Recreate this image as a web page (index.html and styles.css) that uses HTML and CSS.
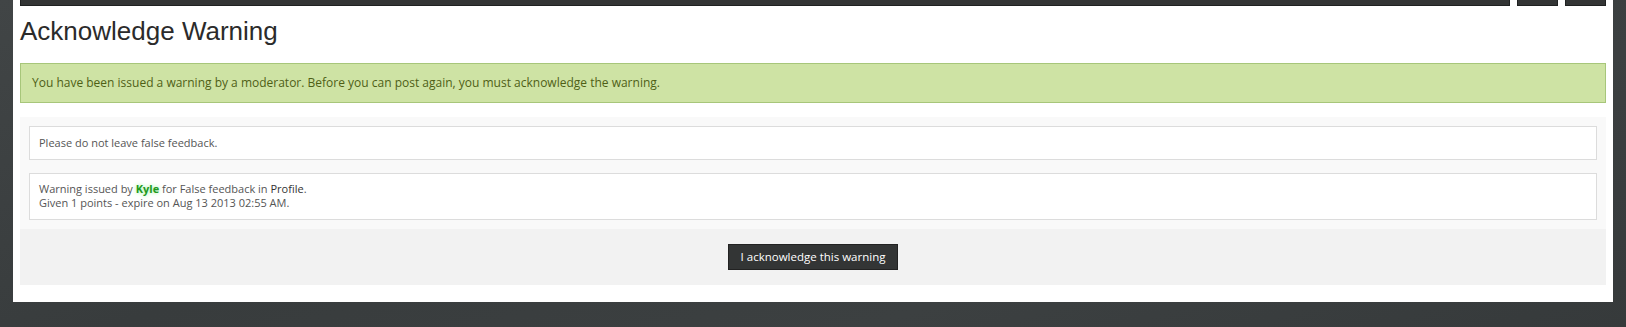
FILE: index.html
```html
<!DOCTYPE html>
<html>
<head>
<meta charset="utf-8">
<link rel="stylesheet" href="styles.css">
</head>
<body>
<div class="page">
  <div class="topbar">
    <div class="bar bar-main"></div>
    <div class="bar bar-small"></div>
    <div class="bar bar-small"></div>
  </div>
  <h1 class="title">Acknowledge Warning</h1>
  <div class="notice">You have been issued a warning by a moderator. Before you can post again, you must acknowledge the warning.</div>
  <div class="panel">
    <div class="box box-reason">Please do not leave false feedback.</div>
    <div class="box box-info">Warning issued by <span class="user">Kyle</span> for False feedback in <span class="link">Profile</span>.<br>Given 1 points - expire on Aug 13 2013 02:55 AM.</div>
  </div>
  <div class="footer">
    <button class="btn" type="button">I acknowledge this warning</button>
  </div>
</div>
</body>
</html>
```
FILE: styles.css
```css
html, body {
  margin: 0;
  padding: 0;
}
body {
  background: #3a3e3f;
  background-image: linear-gradient(160deg, #414546 0%, #383c3d 40%, #3c4041 70%, #363a3b 100%);
  min-height: 327px;
  font-family: "Open Sans", "DejaVu Sans", sans-serif;
}
.page {
  margin-left: 13px;
  width: 1586px;
  background: #fff;
  padding: 0 7px 17px 7px;
}
.topbar {
  display: flex;
  gap: 7px;
  height: 6px;
}
.bar {
  background: #333535;
  border: 1px solid #1f2121;
  border-top: none;
  box-sizing: border-box;
  height: 6px;
}
.bar-main { width: 1490px; }
.bar-small { width: 41px; }
.title {
  font-family: "Liberation Sans", Arial, sans-serif;
  font-weight: normal;
  font-size: 26px;
  line-height: 32px;
  color: #2b2b2b;
  margin: 9px 0 16px 0;
}
.notice {
  background: #cee3a4;
  border: 1px solid #a7c67a;
  color: #4e5f16;
  font-size: 12px;
  line-height: 18px;
  padding: 10px 11px;
}
.panel {
  margin-top: 14px;
  background: #f9f9f9;
  padding: 9px 9px 9px 9px;
  display: flex;
  flex-direction: column;
  gap: 13px;
}
.box {
  background: #fff;
  border: 1px solid #dcdcdc;
  color: #555;
  font-size: 11px;
  padding: 8px 9px;
}
.box-reason { line-height: 16px; }
.box-info { line-height: 14px; padding: 8px 9px 9px 9px; }
.user {
  color: #1f9a1f;
  font-weight: bold;
  text-shadow: 0 0 4px #9df09d;
}
.link { color: #333; }
.footer {
  background: #f2f2f2;
  padding: 15px 0;
  display: flex;
  justify-content: center;
}
.btn {
  background: #333535;
  border: 1px solid #222;
  color: #fff;
  font-family: "Open Sans", "DejaVu Sans", sans-serif;
  font-size: 11.5px;
  height: 26px;
  padding: 0 12px;
  line-height: 24px;
  cursor: pointer;
}
```
